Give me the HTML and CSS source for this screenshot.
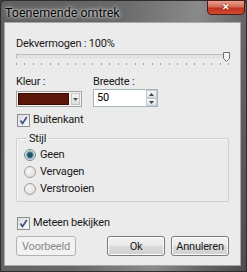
FILE: index.html
```html
<!DOCTYPE html>
<html lang="nl">
<head>
<meta charset="UTF-8">
<title>Toenemende omtrek</title>
<link rel="stylesheet" href="styles.css">
</head>
<body>

<div class="venster">
  <div class="titelbalk">
    <span class="titel">Toenemende omtrek</span>
    <span class="sluiten">&#x2715;</span>
  </div>

  <div class="inhoud">
    <div class="label">Dekvermogen : 100%</div>
    <div class="schuif">
      <div class="spoor"></div>
      <svg class="knop" width="7" height="10" viewBox="0 0 7 10">
        <path d="M0.5 0.5 H6.5 V6.5 L3.5 9.5 L0.5 6.5 Z" fill="#f4f4f4" stroke="#6f6f6f"/>
      </svg>
    </div>
    <div class="streepjes"></div>

    <div class="rij">
      <div class="kolom kleur">
        <div class="label">Kleur :</div>
        <div class="combo">
          <span class="staal"></span>
          <span class="pijl">
            <svg width="5" height="3" viewBox="0 0 5 3"><path d="M0 0 H5 L2.5 3 Z" fill="#555"/></svg>
          </span>
        </div>
      </div>
      <div class="kolom">
        <div class="label">Breedte :</div>
        <div class="teller">
          <span class="waarde">50</span>
          <span class="pijlen">
            <span class="pijltje"><svg width="5" height="3" viewBox="0 0 5 3"><path d="M0 3 H5 L2.5 0 Z" fill="#444"/></svg></span>
            <span class="pijltje"><svg width="5" height="3" viewBox="0 0 5 3"><path d="M0 0 H5 L2.5 3 Z" fill="#444"/></svg></span>
          </span>
        </div>
      </div>
    </div>

    <div class="vink buiten">
      <span class="vakje"><svg width="9" height="9" viewBox="0 0 9 9"><path d="M1.5 4.5 L3.5 7.5 L7.8 1" fill="none" stroke="#3a4f8a" stroke-width="1.6"/></svg></span>
      Buitenkant
    </div>

    <fieldset class="groep">
      <legend>Stijl</legend>
      <div class="optie"><span class="rondje aan"></span>Geen</div>
      <div class="optie"><span class="rondje"></span>Vervagen</div>
      <div class="optie"><span class="rondje"></span>Verstrooien</div>
    </fieldset>

    <div class="vink meteen">
      <span class="vakje"><svg width="9" height="9" viewBox="0 0 9 9"><path d="M1.5 4.5 L3.5 7.5 L7.8 1" fill="none" stroke="#3a4f8a" stroke-width="1.6"/></svg></span>
      Meteen bekijken
    </div>

    <div class="knoppen">
      <button class="uit" disabled>Voorbeeld</button>
      <button class="ok">Ok</button>
      <button>Annuleren</button>
    </div>
  </div>
</div>

</body>
</html>
```

FILE: styles.css
```css
body {
  margin: 0;
  font-family: Roboto, "Liberation Sans", sans-serif;
  font-size: 11px;
  letter-spacing: -0.2px;
  color: #1a1a1a;
  background: #3c3c3c;
}
.venster {
  width: 247px;
  height: 272px;
  box-sizing: border-box;
  border: 1px solid #2e2e2e;
  border-radius: 5px 5px 0 0;
  background: linear-gradient(100deg, #5f5f5f 0%, #686868 40%, #8a8a8a 68%, #6a6a6a 82%, #4c4c4c 100%);
  padding: 0 5px 5px 3px;
}
.titelbalk {
  height: 21px;
  display: flex;
  align-items: flex-start;
  justify-content: space-between;
}
.titel {
  margin: 4px 0 0 1px;
  line-height: 16px;
  font-size: 12.5px;
  letter-spacing: 0;
  color: #000;
  text-shadow: 0 0 5px rgba(255,255,255,0.9), 0 0 2px rgba(255,255,255,0.8);
}
.sluiten {
  width: 38px;
  height: 15px;
  margin-top: -1px;
  margin-right: -4px;
  box-sizing: border-box;
  border: 1px solid #4b1d14;
  border-radius: 0 0 4px 4px;
  background: linear-gradient(#e7a392 0%, #d36a55 45%, #c0341f 55%, #cf4a32 100%);
  color: #fff;
  font-size: 9px;
  font-weight: bold;
  line-height: 13px;
  text-align: center;
  text-shadow: 0 0 2px #5a1508;
}
.inhoud {
  height: 244px;
  box-sizing: border-box;
  border: 1px solid #a9a9a9;
  background: #ebebeb;
  padding: 13px 10px 0 11px;
  display: flex;
  flex-direction: column;
}
.label {
  line-height: 15px;
}
.schuif {
  position: relative;
  height: 10px;
  margin-top: 1px;
}
.spoor {
  margin-top: 2px;
  height: 3px;
  border: 1px solid #bdbdbd;
  border-bottom-color: #e8e8e8;
  background: #e2e2e2;
}
.knop {
  position: absolute;
  right: 0;
  top: 0;
}
.streepjes {
  margin-top: 1px;
  height: 2px;
  background: repeating-linear-gradient(to right, #a4a4a4 0 1px, transparent 1px 8.5px);
}
.rij {
  display: flex;
  margin-top: 10px;
}
.rij .label {
  line-height: 14px;
}
.kolom.kleur {
  width: 77px;
}
.combo {
  margin-top: 2px;
  width: 66px;
  height: 16px;
  box-sizing: border-box;
  border: 1px solid #a4a4a4;
  background: #f2f2f2;
  display: flex;
  padding: 1px;
}
.staal {
  width: 49px;
  background: #5a1709;
  border: 1px solid #3a0d04;
}
.pijl {
  flex: 1;
  display: flex;
  align-items: center;
  justify-content: center;
  margin-left: 2px;
  border: 1px solid #c4c4c4;
  background: linear-gradient(#f5f5f5, #dedede);
}
.teller {
  width: 65px;
  height: 18px;
  box-sizing: border-box;
  border: 1px solid #a6b4bd;
  background: #fff;
  display: flex;
  justify-content: space-between;
}
.waarde {
  padding-left: 3px;
  line-height: 16px;
  color: #000;
}
.pijlen {
  width: 11px;
  display: flex;
  flex-direction: column;
}
.pijltje {
  flex: 1;
  display: flex;
  align-items: center;
  justify-content: center;
  border: 1px solid #c7ccd1;
  background: linear-gradient(#f5f6f7, #dfe3e6);
}
.vink {
  display: flex;
  align-items: center;
  line-height: 14px;
  padding-left: 1px;
}
.buiten {
  margin-top: 6px;
}
.meteen {
  margin-top: 14px;
}
.vakje {
  width: 11px;
  height: 11px;
  margin-right: 3px;
  border: 1px solid #8e8f8f;
  background: linear-gradient(135deg, #dcdcdc, #fafafa);
  display: flex;
  align-items: center;
  justify-content: center;
}
.groep {
  margin: 4px 1px 0 0;
  padding: 0 0 4px 7px;
  border: 1px solid #cfcfcf;
  border-radius: 2px;
  box-shadow: inset 1px 1px 0 #f8f8f8;
}
.groep legend {
  margin-left: 3px;
  padding: 0 2px;
  line-height: 15px;
}
.optie {
  display: flex;
  align-items: center;
  line-height: 17px;
}
.rondje {
  width: 10px;
  height: 10px;
  margin-right: 4px;
  border-radius: 50%;
  border: 1px solid #a0a0a0;
  background: radial-gradient(circle at 40% 40%, #f8f8f8, #d6d6d6);
}
.rondje.aan {
  background: radial-gradient(circle, #22505e 0 2px, #4f8596 3px, #bccfd6 4px, #e6e6e6 5px);
  border-color: #7c8a95;
}
.knoppen {
  display: flex;
  margin-top: 6px;
  margin-right: 1px;
}
button {
  height: 20px;
  width: 58px;
  padding: 0;
  font-family: Roboto, "Liberation Sans", sans-serif;
  font-size: 11px;
  letter-spacing: -0.2px;
  color: #1a1a1a;
  border: 1px solid #7a7a7a;
  border-radius: 3px;
  background: linear-gradient(#f3f3f3 0%, #e9e9e9 48%, #dcdcdc 52%, #cfcfcf 100%);
  box-shadow: inset 0 0 0 1px #fbfbfb;
  margin-left: 6px;
}
button.uit {
  width: 60px;
  margin-left: 0;
  color: #8a8a8a;
  border-color: #b2b2b2;
  background: #f2f2f2;
  box-shadow: none;
}
button.ok {
  margin-left: auto;
}
```
